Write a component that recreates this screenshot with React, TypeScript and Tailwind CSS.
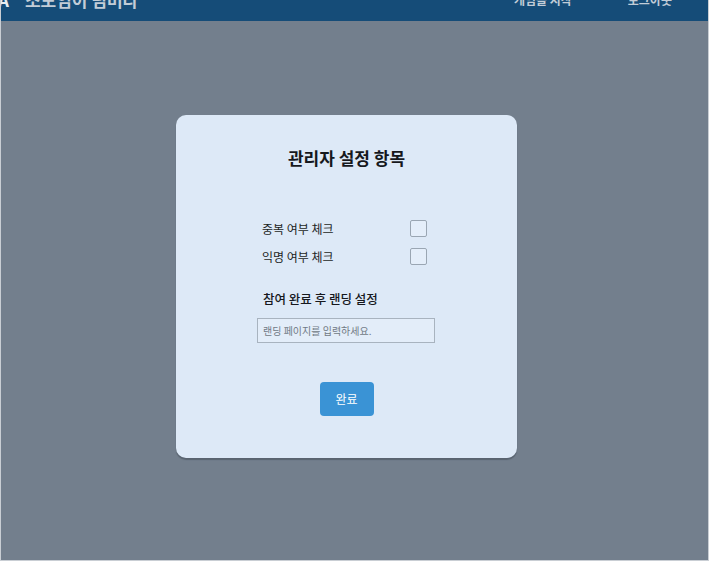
export default function App() {
  const checks = ["중복 여부 체크", "익명 여부 체크"];

  return (
    <div
      className="h-[561px] w-[709px] flex flex-col overflow-hidden border-x border-b border-[#c9ced4]"
      style={{ fontFamily: '"Noto Sans CJK KR", "Noto Sans", sans-serif' }}
    >
      {/* top navigation, dimmed behind the modal */}
      <header className="h-[21px] shrink-0 bg-[#154c78] overflow-hidden flex items-start text-[#c2ccd7] whitespace-nowrap">
        <div className="-mt-[13px] h-[26px] flex items-center">
          <span className="text-[17px] font-bold text-[#e8edf2] -ml-[3px]">A</span>
          <span className="ml-[16px] text-[17px] font-semibold">소모임이 넘버다</span>
        </div>
        <div className="-mt-[13px] h-[26px] ml-auto mr-[36px] flex items-center gap-[56px] text-[12px] font-semibold">
          <span>게임을 시작</span>
          <span>로그아웃</span>
        </div>
      </header>

      <main className="flex-1 bg-[#737f8d] pt-[94px] pl-[175px]">
        <div className="w-[341px] h-[343px] rounded-[10px] bg-[#dde9f7] shadow-[0_2px_1px_rgba(40,50,60,0.35)] flex flex-col">
          <h2 className="mt-[31px] text-center text-[17px] leading-[24px] font-bold text-[#16181d]">
            관리자 설정 항목
          </h2>

          <div className="mt-[50px] ml-[86px] w-[165px] flex flex-col gap-[11px]">
            {checks.map((label) => (
              <div key={label} className="flex items-center justify-between h-[17px]">
                <span className="text-[12px] text-[#1c1f24]">{label}</span>
                <span className="w-[17px] h-[17px] border border-[#9aa6b3] rounded-[2px] bg-[#e4eefa]" />
              </div>
            ))}
          </div>

          <div className="mt-[25px] ml-[87px] text-[12.5px] font-medium text-[#16181d] leading-[18px]">
            참여 완료 후 랜딩 설정
          </div>

          <input
            className="mt-[10px] ml-[81px] w-[178px] h-[25px] border border-[#a8b3bf] bg-[#e3edf9] px-[5px] text-[10px] text-[#333] placeholder:text-[#717a85] outline-none"
            placeholder="랜딩 페이지를 입력하세요."
          />

          <button className="mt-[39px] mx-auto w-[54px] h-[34px] rounded-[4px] bg-[#3a93d5] text-white text-[12px]">
            완료
          </button>
        </div>
      </main>
    </div>
  );
}
